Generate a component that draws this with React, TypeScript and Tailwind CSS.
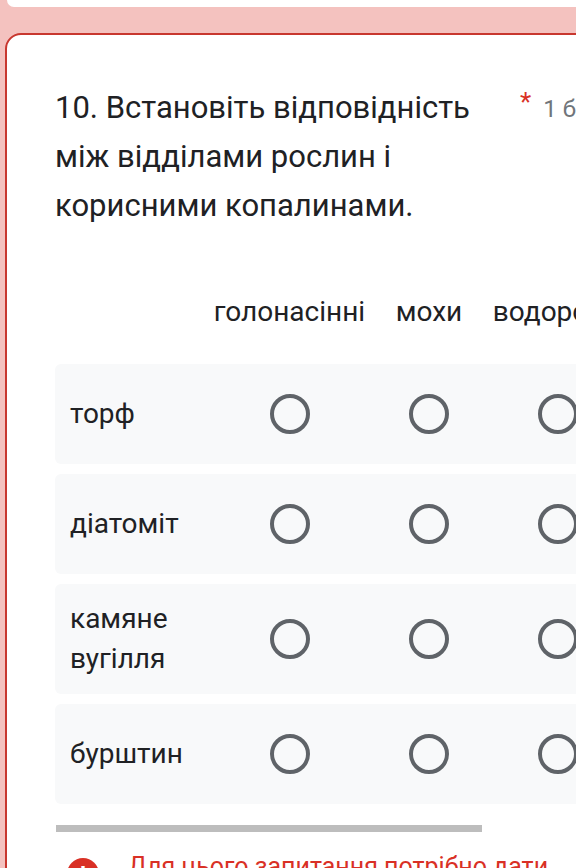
import React from "react";

const cols = ["голонасінні", "мохи", "водорості"];
const rows = [["торф"], ["діатоміт"], ["камяне", "вугілля"], ["бурштин"]];

function Radio() {
  return <div className="w-[40px] h-[40px] rounded-full border-[4px] border-[#5f6368]" />;
}

export default function App() {
  return (
    <div className="w-[576px] h-[868px] overflow-hidden bg-[#f4c2bf]" style={{ fontFamily: "Roboto, 'Noto Sans', sans-serif" }}>
      <div className="ml-[7px] w-[640px] h-[7px] bg-white rounded-b-[14px]" />
      <div className="mt-[26px] ml-[5px] w-[700px] bg-white border-[2px] border-[#c8372f] rounded-[16px] pl-[48px] pt-[48px] pb-[60px]">
        <div className="flex items-start">
          <div className="w-[450px] text-[31px] leading-[49px] text-[#202124]">
            <div>10. Встановіть відповідність</div>
            <div>між відділами рослин і</div>
            <div>корисними копалинами.</div>
          </div>
          <span className="ml-[15px] mt-[4px] text-[26px] leading-[30px] text-[#d93025]">*</span>
          <span className="ml-[12px] mt-[11px] text-[24px] leading-[30px] text-[#70757a]">1 бал</span>
        </div>

        <div className="mt-[52px] flex h-[60px] items-center text-[28px] text-[#202124]">
          <div className="w-[143px] shrink-0" />
          <div className="w-[183px] shrink-0 text-center">{cols[0]}</div>
          <div className="w-[96px] shrink-0 text-center">{cols[1]}</div>
          <div className="w-[162px] shrink-0 text-center">{cols[2]}</div>
        </div>

        <div className="mt-[22px] flex flex-col gap-[10px]">
          {rows.map((r, i) => (
            <div key={i} className="flex min-h-[100px] items-stretch bg-[#f8f9fa] rounded-l-[6px]">
              <div className="w-[143px] shrink-0 pl-[15px] py-[15px] flex flex-col justify-center text-[28px] leading-[40px] text-[#202124]">
                {r.map((l, j) => (
                  <div key={j}>{l}</div>
                ))}
              </div>
              <div className="w-[183px] shrink-0 flex items-center justify-center"><Radio /></div>
              <div className="w-[96px] shrink-0 flex items-center justify-center"><Radio /></div>
              <div className="w-[162px] shrink-0 flex items-center justify-center"><Radio /></div>
            </div>
          ))}
        </div>

        <div className="mt-[21px] ml-[1px] w-[426px] h-[7px] bg-[#bdbdbd]" />

        <div className="mt-[18px] flex items-start">
          <div className="ml-[12px] mt-[8px] w-[32px] h-[32px] rounded-full bg-[#d93025] flex items-center justify-center text-white text-[22px] font-bold">!</div>
          <div className="ml-[29px] w-[440px] text-[25px] leading-[34px] text-[#d93025]">Для цього запитання потрібно дати відповідь</div>
        </div>
      </div>
    </div>
  );
}
